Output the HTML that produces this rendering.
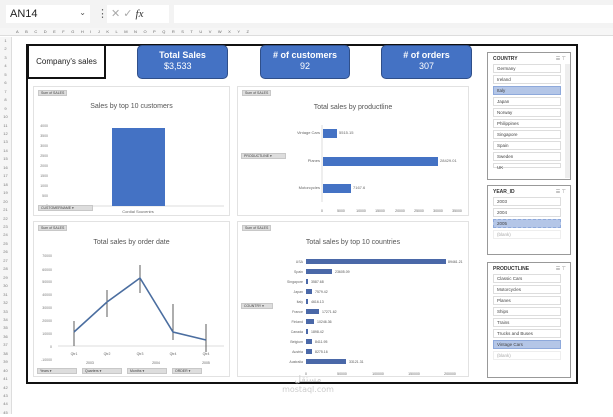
<!DOCTYPE html>
<html><head><meta charset="utf-8"><style>
*{margin:0;padding:0;box-sizing:border-box}
body{width:613px;height:414px;overflow:hidden;background:#fff;font-family:"Liberation Sans",sans-serif;position:relative}
.a{position:absolute}
.kpi{position:absolute;background:#4472c4;border:1px solid #2f4f8a;border-radius:5px;color:#fff;text-align:center;font-size:9px;line-height:11px;padding-top:4px}
.kpi b{font-weight:bold;display:block}
.card{position:absolute;border:1px solid #e2e2e2;background:#fff}
.tag{position:absolute;background:#ddd;border:1px solid #c8c8c8;font-size:3.5px;color:#444;height:6px;line-height:5px;padding:0 2px}
.ttl{position:absolute;width:100%;text-align:center;font-size:7px;color:#555}
.sl{position:absolute;border:1px solid #999;background:#fff}
.sl .h{font-size:5px;font-weight:bold;color:#333;padding:3px 0 0 5px;height:11px}
.it{margin:0 0 2px 5px;width:68px;height:9px;border:1px solid #ddd;font-size:4.5px;color:#444;line-height:7px;padding-left:3px}
.sel{background:#b4c6e7;border-color:#8ea9db}
.rn{font-size:4px;color:#777;line-height:8.45px;text-align:center}
</style></head><body>
<div class="a" style="left:0;top:0;width:613px;height:28px;background:#f3f3f3"></div>
<div class="a" style="left:6px;top:5px;width:84px;height:18px;background:#fff;font-size:11px;padding:3px 4px;color:#222">AN14<span style="position:absolute;right:4px;font-size:8px;color:#555">⌄</span></div>
<div class="a" style="left:97px;top:7px;font-size:11px;color:#666">⋮</div>
<div class="a" style="left:107px;top:5px;width:62px;height:18px;background:#fff;font-size:11px;color:#aaa;padding:2px 4px">✕ ✓ <i style="color:#333;font-family:'Liberation Serif',serif">fx</i></div>
<div class="a" style="left:174px;top:5px;width:439px;height:18px;background:#fff"></div>
<div class="a" style="left:0;top:28px;width:613px;height:8px;background:#f6f6f6;border-bottom:1px solid #ddd;font-size:4px;color:#666;letter-spacing:6.5px;padding-left:16px;white-space:nowrap;line-height:8px">ABCDEFGHIJKLMNOPQRSTUVWXYZ</div>
<div class="a rn" style="left:0;top:37px;width:12px;height:377px;background:#f6f6f6;border-right:1px solid #ddd">1<br>2<br>3<br>4<br>5<br>6<br>7<br>8<br>9<br>10<br>11<br>12<br>13<br>14<br>15<br>16<br>17<br>18<br>19<br>20<br>21<br>22<br>23<br>24<br>25<br>26<br>27<br>28<br>29<br>30<br>31<br>32<br>33<br>34<br>35<br>36<br>37<br>38<br>39<br>40<br>41<br>42<br>43<br>44<br>45</div>
<div class="a" style="left:26px;top:44px;width:552px;height:340px;border:2px solid #111"></div>
<div class="a" style="left:28px;top:45px;width:78px;height:34px;border:2px solid #111;border-left:1px solid #111;border-top:1px solid #111;font-size:8px;color:#222;text-align:center;line-height:32px">Company's sales</div>
<div class="kpi" style="left:137px;top:45px;width:91px;height:34px"><b>Total Sales</b><span style="display:block;text-align:left;padding-left:26px">$3,533</span></div>
<div class="kpi" style="left:260px;top:45px;width:90px;height:34px"><b># of customers</b>92</div>
<div class="kpi" style="left:381px;top:45px;width:91px;height:34px"><b># of orders</b>307</div>

<div class="card" style="left:33px;top:86px;width:197px;height:130px">
<div class="tag" style="left:4px;top:3px">Sum of SALES</div>
<div class="ttl" style="top:16px">Sales by top 10 customers</div>
<svg class="a" style="left:0;top:0" width="197" height="130"><g font-size="3.5" fill="#777" text-anchor="end"><text x="14" y="40">4000</text><text x="14" y="50">3500</text><text x="14" y="60">3000</text><text x="14" y="70">2500</text><text x="14" y="80">2000</text><text x="14" y="90">1500</text><text x="14" y="100">1000</text><text x="14" y="110">500</text><text x="14" y="120">0</text></g>
<line x1="18" y1="119" x2="190" y2="119" stroke="#ddd"/><rect x="78" y="41" width="53" height="78" fill="#4472c4"/><text x="104" y="112" font-size="4" fill="#666" text-anchor="middle" transform="translate(0,14)">Cordial Souvenirs</text></svg>
<div class="tag" style="left:4px;top:118px;width:55px">CUSTOMERNAME ▾</div></div>

<div class="card" style="left:237px;top:86px;width:232px;height:130px">
<div class="tag" style="left:4px;top:3px">Sum of SALES</div>
<div class="ttl" style="top:17px">Total sales by productline</div>
<div class="tag" style="left:3px;top:66px;width:45px">PRODUCTLINE ▾</div>
<svg class="a" style="left:0;top:0" width="232" height="130"><line x1="84" y1="38" x2="84" y2="115" stroke="#ddd"/>
<g font-size="4" fill="#666"><text x="82" y="47" text-anchor="end">Vintage Cars</text><text x="82" y="75" text-anchor="end">Planes</text><text x="82" y="102" text-anchor="end">Motorcycles</text>
<text x="101" y="47">5515.15</text><text x="202" y="75">28429.01</text><text x="115" y="102">7167.6</text></g>
<rect x="85" y="42" width="14" height="9" fill="#4472c4"/><rect x="85" y="70" width="115" height="9" fill="#4472c4"/><rect x="85" y="97" width="28" height="9" fill="#4472c4"/>
<g font-size="3.5" fill="#666" text-anchor="middle"><text x="84" y="125">0</text><text x="103" y="125">5000</text><text x="123" y="125">10000</text><text x="142" y="125">15000</text><text x="162" y="125">20000</text><text x="181" y="125">25000</text><text x="200" y="125">30000</text><text x="219" y="125">35000</text></g></svg></div>

<div class="card" style="left:33px;top:221px;width:197px;height:156px">
<div class="tag" style="left:4px;top:3px">Sum of SALES</div>
<div class="ttl" style="top:17px">Total sales by order date</div>
<svg class="a" style="left:0;top:0" width="197" height="156"><g font-size="3.5" fill="#777" text-anchor="end"><text x="18" y="35">70000</text><text x="18" y="49">60000</text><text x="18" y="61">50000</text><text x="18" y="74">40000</text><text x="18" y="87">30000</text><text x="18" y="100">20000</text><text x="18" y="113">10000</text><text x="18" y="126">0</text><text x="18" y="139">-10000</text></g>
<line x1="24" y1="124" x2="190" y2="124" stroke="#ddd"/>
<g stroke="#333" stroke-width=".8"><line x1="40" y1="99" x2="40" y2="124"/><line x1="73" y1="68" x2="73" y2="95"/><line x1="106" y1="43" x2="106" y2="71"/><line x1="139" y1="82" x2="139" y2="118"/><line x1="172" y1="102" x2="172" y2="130"/></g>
<polyline points="40,110 73,80 106,56 139,110 172,118" fill="none" stroke="#4b6ea0" stroke-width="1.6"/>
<g font-size="3.5" fill="#666" text-anchor="middle"><text x="40" y="133">Qtr1</text><text x="73" y="133">Qtr2</text><text x="106" y="133">Qtr3</text><text x="139" y="133">Qtr4</text><text x="172" y="133">Qtr4</text><text x="56" y="142">2003</text><text x="122" y="142">2004</text><text x="172" y="142">2005</text></g></svg>
<div class="tag" style="left:3px;top:146px;width:40px">Years ▾</div><div class="tag" style="left:48px;top:146px;width:40px">Quarters ▾</div><div class="tag" style="left:93px;top:146px;width:40px">Months ▾</div><div class="tag" style="left:138px;top:146px;width:30px">ORDER ▾</div></div>

<div class="card" style="left:237px;top:221px;width:232px;height:156px">
<div class="tag" style="left:4px;top:3px">Sum of SALES</div>
<div class="ttl" style="top:17px">Total sales by top 10 countries</div>
<div class="tag" style="left:3px;top:81px;width:32px">COUNTRY ▾</div>
<svg class="a" style="left:0;top:0" width="232" height="156"><g font-size="3.5" fill="#666" text-anchor="end"><text x="65" y="41">USA</text><text x="65" y="51">Spain</text><text x="65" y="61">Singapore</text><text x="65" y="71">Japan</text><text x="65" y="81">Italy</text><text x="65" y="91">France</text><text x="65" y="101">Finland</text><text x="65" y="111">Canada</text><text x="65" y="121">Belgium</text><text x="65" y="131">Austria</text><text x="65" y="141">Australia</text></g>
<g fill="#4a68a8"><rect x="68" y="37" width="140" height="5"/><rect x="68" y="47" width="26" height="5"/><rect x="68" y="57" width="2" height="5"/><rect x="68" y="67" width="6" height="5"/><rect x="68" y="77" width="2" height="5"/><rect x="68" y="87" width="13" height="5"/><rect x="68" y="97" width="8" height="5"/><rect x="68" y="107" width="2" height="5"/><rect x="68" y="117" width="6" height="5"/><rect x="68" y="127" width="6" height="5"/><rect x="68" y="137" width="40" height="5"/></g>
<g font-size="3.5" fill="#555"><text x="210" y="41">89461.21</text><text x="97" y="51">23605.09</text><text x="73" y="61">3587.68</text><text x="77" y="71">7579.42</text><text x="73" y="81">4616.13</text><text x="84" y="91">17271.62</text><text x="79" y="101">10246.36</text><text x="73" y="111">1898.42</text><text x="77" y="121">8411.95</text><text x="77" y="131">8275.16</text><text x="111" y="141">33121.31</text></g>
<g font-size="3.5" fill="#666" text-anchor="middle"><text x="68" y="153">0</text><text x="104" y="153">50000</text><text x="140" y="153">100000</text><text x="176" y="153">150000</text><text x="212" y="153">200000</text></g></svg></div>

<div class="sl" style="left:487px;top:52px;width:84px;height:128px"><div class="h">COUNTRY <span style="float:right;padding-right:4px;color:#888;font-weight:normal">☰ ⊤</span></div>
<div class="it">Germany</div><div class="it">Ireland</div><div class="it sel">Italy</div><div class="it">Japan</div><div class="it">Norway</div><div class="it">Philippines</div><div class="it">Singapore</div><div class="it">Spain</div><div class="it">Sweden</div><div class="it" style="height:5px">UK</div>
<div class="a" style="left:77px;top:11px;width:5px;height:114px;background:#eee"></div></div>
<div class="sl" style="left:487px;top:185px;width:84px;height:70px"><div class="h">YEAR_ID <span style="float:right;padding-right:4px;color:#888;font-weight:normal">☰ ⊤</span></div>
<div class="it">2003</div><div class="it">2004</div><div class="it sel" style="border-style:dashed">2005</div><div class="it" style="color:#aaa;border-color:#eee">(blank)</div></div>
<div class="sl" style="left:487px;top:262px;width:84px;height:116px"><div class="h">PRODUCTLINE <span style="float:right;padding-right:4px;color:#888;font-weight:normal">☰ ⊤</span></div>
<div class="it">Classic Cars</div><div class="it">Motorcycles</div><div class="it">Planes</div><div class="it">Ships</div><div class="it">Trains</div><div class="it">Trucks and Buses</div><div class="it sel">Vintage Cars</div><div class="it" style="color:#aaa;border-color:#eee">(blank)</div></div>

<div class="a" style="left:268px;top:376px;width:80px;text-align:center;color:#ccc;font-size:9px;line-height:9px;font-family:'DejaVu Sans',sans-serif">مستقل<br><span style="font-size:8px">mostaql.com</span></div>
</body></html>
